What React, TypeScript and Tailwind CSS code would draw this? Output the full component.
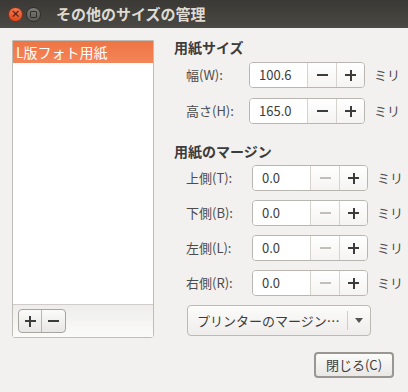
import React from 'react';

const font = { fontFamily: '"Noto Sans CJK JP", "Noto Sans", sans-serif' };

const Spin = ({ value, minusDisabled }: { value: string; minusDisabled?: boolean }) => (
  <div className="flex h-[26px] w-[116px] rounded-[4px] border border-[#b9b6b1] overflow-hidden shadow-[inset_0_1px_1px_rgba(0,0,0,0.06)]">
    <div className="flex-1 bg-white pl-[9px] text-[13px] leading-[24px] text-[#3c3c3c]">{value}</div>
    <div className="w-[29px] border-l border-[#d6d3cf] bg-gradient-to-b from-[#ffffff] to-[#f5f4f2] flex items-center justify-center">
      <div className={`w-[11px] h-[2px] ${minusDisabled ? 'bg-[#c2bfba]' : 'bg-[#3c3c3c]'}`} />
    </div>
    <div className="w-[28px] border-l border-[#d6d3cf] bg-gradient-to-b from-[#ffffff] to-[#f5f4f2] flex items-center justify-center">
      <div className="relative w-[11px] h-[11px]">
        <div className="absolute left-0 top-[4.5px] w-[11px] h-[2px] bg-[#3c3c3c]" />
        <div className="absolute top-0 left-[4.5px] w-[2px] h-[11px] bg-[#3c3c3c]" />
      </div>
    </div>
  </div>
);

const Row = ({ label, value, labelW, minusDisabled }: { label: string; value: string; labelW: string; minusDisabled?: boolean }) => (
  <div className="flex items-center h-[26px] pl-[12px]">
    <div className={`${labelW} text-[13px] text-[#4c4c4c]`}>{label}</div>
    <Spin value={value} minusDisabled={minusDisabled} />
    <div className="ml-[9px] text-[13px] text-[#4c4c4c]">ミリ</div>
  </div>
);

export default function App() {
  return (
    <div className="w-[408px] h-[392px] bg-[#f2f1f0] flex flex-col" style={font}>
      {/* title bar */}
      <div className="h-[28px] bg-gradient-to-b from-[#3a3935] to-[#4a4944] flex items-center pl-[8px]">
        <div className="w-[15px] h-[15px] rounded-full bg-gradient-to-b from-[#f4774d] to-[#df4a1e] border border-[#8a2e14] flex items-center justify-center text-[#4a1a0a] text-[10px] leading-none font-bold">
          ×
        </div>
        <div className="ml-[3px] w-[15px] h-[15px] rounded-full bg-gradient-to-b from-[#7e7c76] to-[#5c5a55] border border-[#2f2e2b] flex items-center justify-center">
          <div className="w-[7px] h-[7px] border border-[#2f2e2b] rounded-[1px]" />
        </div>
        <div className="ml-[15px] text-[15px] font-bold text-[#dfdbd2]">その他のサイズの管理</div>
      </div>

      <div className="flex flex-1">
        {/* left list */}
        <div className="ml-[12px] mt-[12px] w-[142px] h-[298px] flex flex-col border border-[#c0bdb8] rounded-b-[3px] bg-white">
          <div className="h-[263px] flex flex-col">
            <div className="h-[22px] bg-gradient-to-b from-[#ee7443] to-[#f48559] text-white text-[14px] leading-[22px] pl-[3px]">
              L版フォト用紙
            </div>
          </div>
          <div className="flex-1 border-t border-[#d0cdc8] bg-gradient-to-b from-[#eeedeb] to-[#fbfbfa] pl-[5px] pt-[4px]">
            <div className="flex w-[48px] h-[24px] rounded-[4px] border border-[#a8a5a0] bg-gradient-to-b from-[#fbfbfa] to-[#e8e7e5] overflow-hidden">
              <div className="w-[23px] flex items-center justify-center border-r border-[#b9b6b1]">
                <div className="relative w-[11px] h-[11px]">
                  <div className="absolute left-0 top-[4.5px] w-[11px] h-[2px] bg-[#3c3c3c]" />
                  <div className="absolute top-0 left-[4.5px] w-[2px] h-[11px] bg-[#3c3c3c]" />
                </div>
              </div>
              <div className="flex-1 flex items-center justify-center">
                <div className="w-[11px] h-[2px] bg-[#3c3c3c]" />
              </div>
            </div>
          </div>
        </div>

        {/* right side */}
        <div className="ml-[20px] flex flex-col">
          <div className="mt-[10px] h-[18px] text-[14px] font-bold text-[#3c3c3c] leading-[18px]">用紙サイズ</div>
          <div className="mt-[6px] flex flex-col gap-[10px]">
            <Row label="幅(W):" value="100.6" labelW="w-[63px]" />
            <Row label="高さ(H):" value="165.0" labelW="w-[63px]" />
          </div>
          <div className="mt-[18px] h-[18px] text-[14px] font-bold text-[#3c3c3c] leading-[18px]">用紙のマージン</div>
          <div className="mt-[5px] flex flex-col gap-[9px]">
            <Row label="上側(T):" value="0.0" labelW="w-[66px]" minusDisabled />
            <Row label="下側(B):" value="0.0" labelW="w-[66px]" minusDisabled />
            <Row label="左側(L):" value="0.0" labelW="w-[66px]" minusDisabled />
            <Row label="右側(R):" value="0.0" labelW="w-[66px]" minusDisabled />
          </div>
          <div className="mt-[9px] ml-[13px] w-[184px] h-[31px] flex items-center rounded-[4px] border border-[#bdbab5] bg-gradient-to-b from-[#fcfcfb] to-[#eeedeb]">
            <div className="flex-1 pl-[9px] text-[13px] text-[#3c3c3c]">プリンターのマージン…</div>
            <div className="w-px h-[19px] bg-[#d0cdc8]" />
            <div className="w-[22px] flex items-center justify-center">
              <svg width="8" height="5" viewBox="0 0 8 5">
                <path d="M0 0 L8 0 L4 5 Z" fill="#555" />
              </svg>
            </div>
          </div>
          <div className="mt-[16px] ml-[140px] w-[80px] h-[26px] rounded-[4px] border-2 border-[#9a9792] bg-gradient-to-b from-[#fbfbfa] to-[#e9e8e6] flex items-center justify-center text-[13px] text-[#3c3c3c]">
            閉じる(C)
          </div>
        </div>
      </div>
    </div>
  );
}
